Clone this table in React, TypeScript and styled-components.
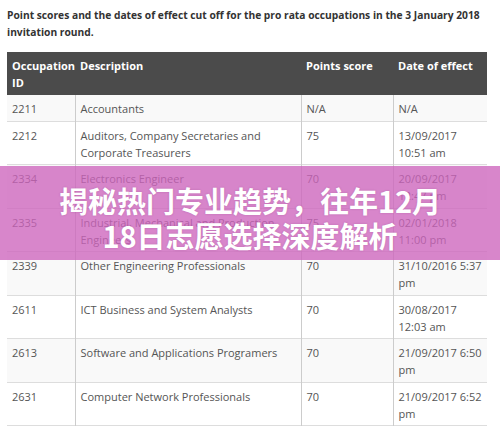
import React from "react"
import styled, { createGlobalStyle } from "styled-components"

const GlobalStyle = createGlobalStyle`
	html, body {
		margin: 0;
		padding: 0;
		background: #ffffff;
	}
	body {
		font-family: "Open Sans", "Liberation Sans", sans-serif;
	}
`

interface Row {
	id: string
	desc: string
	score: string
	date: string
}

const rows: Row[] = [
	{ id: "2211", desc: "Accountants", score: "N/A", date: "N/A" },
	{ id: "2212", desc: "Auditors, Company Secretaries and Corporate Treasurers", score: "75", date: "13/09/2017 10:51 am" },
	{ id: "2334", desc: "Electronics Engineer", score: "70", date: "20/09/2017 12:47 pm" },
	{ id: "2335", desc: "Industrial, Mechanical and Production Engineers", score: "75", date: "02/01/2018 11:00 pm" },
	{ id: "2339", desc: "Other Engineering Professionals", score: "70", date: "31/10/2016 5:37 pm" },
	{ id: "2611", desc: "ICT Business and System Analysts", score: "70", date: "30/08/2017 12:03 am" },
	{ id: "2613", desc: "Software and Applications Programers", score: "70", date: "21/09/2017 6:50 pm" },
	{ id: "2631", desc: "Computer Network Professionals", score: "70", date: "21/09/2017 6:52 pm" },
]

const Page = styled.div`
	position: relative;
	width: 500px;
	height: 429px;
	overflow: hidden;
	padding: 7px 7px 0 7px;
	box-sizing: border-box;
`

const Heading = styled.p`
	margin: 0 0 11px 0;
	font-size: 10.25px;
	line-height: 17px;
	font-weight: 700;
	color: #333333;
	width: 486px;
`

const Table = styled.table`
	width: 480px;
	border-collapse: collapse;
	table-layout: fixed;
	font-size: 11px;
	line-height: 17px;
	color: #555555;
`

const HeadCell = styled.th<{ $w: number }>`
	width: ${p => p.$w}px;
	background: #4b4b4b;
	color: #ffffff;
	font-weight: 700;
	text-align: left;
	vertical-align: top;
	padding: 5px 5px 4px 5px;
	box-sizing: border-box;
`

const BodyRow = styled.tr<{ $odd: boolean }>`
	background: ${p => (p.$odd ? "#f9f9f9" : "#ffffff")};
	border-bottom: 1px solid #dddddd;
`

const Cell = styled.td`
	padding: 5px 5px 3.5px 5px;
	vertical-align: top;
	border-left: 1px solid #cccccc;
	&:first-child {
		border-left: none;
	}
`

const Banner = styled.div`
	position: absolute;
	left: 0;
	top: 166px;
	width: 500px;
	height: 94px;
	background: rgba(205, 100, 188, 0.78);
	display: flex;
	flex-direction: column;
	align-items: center;
	justify-content: center;
	padding-top: 9px;
	box-sizing: border-box;
`

const BannerText = styled.div`
	font-family: "Noto Sans CJK SC", "Noto Sans", sans-serif;
	font-weight: 700;
	font-size: 29px;
	line-height: 35px;
	color: #ffffff;
	text-align: center;
	text-shadow: 0 0 2px rgba(120, 40, 110, 0.3);
`

const App: React.FC = () => {
	return (
		<>
			<GlobalStyle />
			<Page>
				<Heading>
					Point scores and the dates of effect cut off for the pro rata occupations in the 3 January 2018 invitation round.
				</Heading>
				<Table>
					<thead>
						<tr>
							<HeadCell $w={68}>Occupation ID</HeadCell>
							<HeadCell $w={226}>Description</HeadCell>
							<HeadCell $w={92}>Points score</HeadCell>
							<HeadCell $w={94}>Date of effect</HeadCell>
						</tr>
					</thead>
					<tbody>
						{rows.map((r, i) => (
							<BodyRow key={r.id} $odd={i % 2 == 0}>
								<Cell>{r.id}</Cell>
								<Cell>{r.desc}</Cell>
								<Cell>{r.score}</Cell>
								<Cell>{r.date}</Cell>
							</BodyRow>
						))}
					</tbody>
				</Table>
				<Banner>
					<BannerText>揭秘热门专业趋势，往年12月</BannerText>
					<BannerText>18日志愿选择深度解析</BannerText>
				</Banner>
			</Page>
		</>
	)
}

export default App
